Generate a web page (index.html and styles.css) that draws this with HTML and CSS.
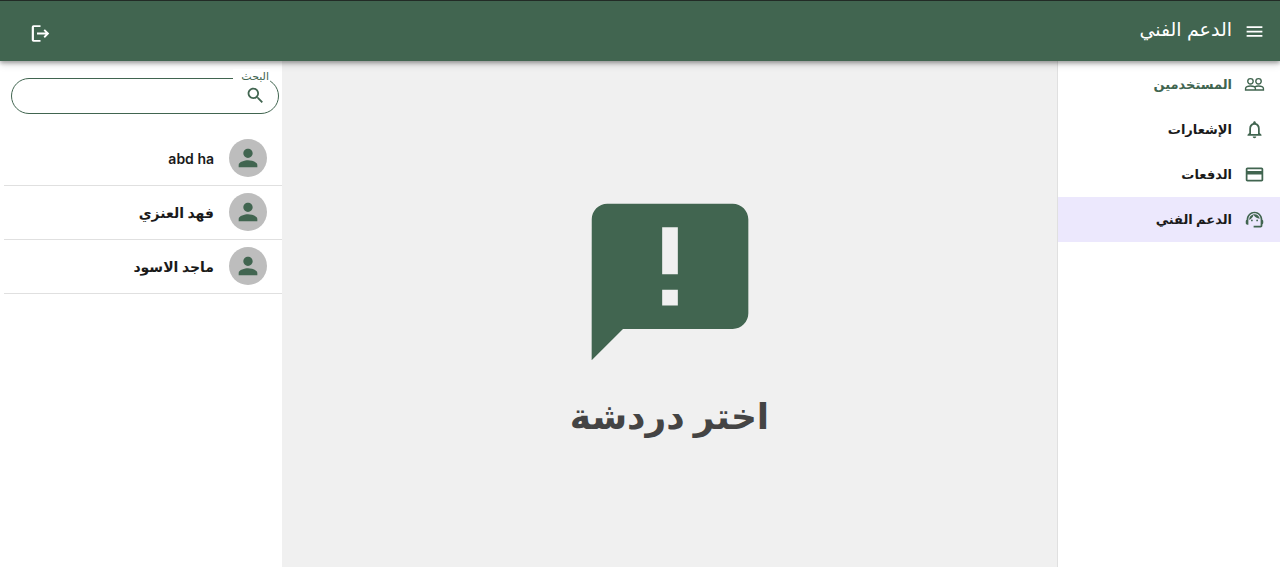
FILE: index.html
```html
<!DOCTYPE html>
<html lang="ar" dir="rtl">
<head>
<meta charset="utf-8">
<meta name="viewport" content="width=device-width, initial-scale=1">
<title>الدعم الفني</title>
<link rel="stylesheet" href="styles.css">
</head>
<body>
<header class="topbar">
  <button class="icon-button" type="button" aria-label="القائمة">
    <svg class="icon" viewBox="0 0 24 24"><path d="M3 18h18v-2H3v2zm0-5h18v-2H3v2zm0-7v2h18V6H3z"/></svg>
  </button>
  <h1 class="topbar-title">الدعم الفني</h1>
  <button class="icon-button logout" type="button" aria-label="تسجيل الخروج">
    <svg class="icon" viewBox="0 0 24 24"><path d="M12 2.500v2.200H4.500v14.600H12v2.200H4q-2 0-2-2v-15q0-2 2-2zM17 7l5 5-5 5-1.500-1.500 2.300-2.400H8v-2.200h9.800l-2.300-2.400z"/></svg>
  </button>
</header>
<div class="layout">
  <nav class="sidebar">
    <a class="nav-link nav-link-accent" href="#users">
      <svg class="icon" viewBox="0 0 24 24"><path fill="none" stroke="currentColor" stroke-width="1.600" d="M7.400 5.300a3.100 3.100 0 1 1 0 6.200 3.100 3.100 0 0 1 0-6.200zM16.600 5.300a3.100 3.100 0 1 1 0 6.200 3.100 3.100 0 0 1 0-6.200zM1.800 18.200v-1.700c0-1.800 2.400-2.800 5.600-2.800s5.600 1 5.600 2.800v1.700zM13 18.200h9.200v-1.700c0-1.800-2.400-2.800-5.600-2.800-1.700 0-3.200.3-4.200.9"/></svg>
      <span>المستخدمين</span>
    </a>
    <a class="nav-link" href="#notifications">
      <svg class="icon" viewBox="0 0 24 24"><path d="M12 22c1.100 0 2-.900 2-2h-4c0 1.100.900 2 2 2zm6-6v-5c0-3.070-1.630-5.640-4.500-6.320V4c0-.830-.670-1.500-1.500-1.500s-1.500.670-1.500 1.500v.680C7.640 5.360 6 7.920 6 11v5l-2 2v1h16v-1l-2-2zm-2 1H8v-6c0-2.480 1.510-4.500 4-4.500s4 2.020 4 4.500v6z"/></svg>
      <span>الإشعارات</span>
    </a>
    <a class="nav-link" href="#payments">
      <svg class="icon" viewBox="0 0 24 24"><path d="M20 4H4c-1.110 0-1.990.890-1.990 2L2 18c0 1.110.890 2 2 2h16c1.110 0 2-.890 2-2V6c0-1.110-.890-2-2-2zm0 14H4v-6h16v6zm0-10H4V6h16v2z"/></svg>
      <span>الدفعات</span>
    </a>
    <a class="nav-link nav-link-active" href="#support" aria-current="page">
      <svg class="icon" viewBox="0 0 24 24"><path d="M21 12.220C21 6.730 16.740 3 12 3c-4.690 0-9 3.650-9 9.280-.600.340-1 .980-1 1.720v2c0 1.100.900 2 2 2h1v-6.100c0-3.870 3.130-7 7-7s7 3.130 7 7V19h-8v2h8c1.100 0 2-.900 2-2v-1.220c.590-.310 1-.920 1-1.640v-2.300c0-.700-.410-1.310-1-1.620z"/><circle cx="9" cy="13" r="1"/><circle cx="15" cy="13" r="1"/><path d="M18 11.030C17.520 8.180 15.040 6 12.050 6c-3.030 0-6.290 2.510-6.030 6.450 2.470-1.010 4.330-3.210 4.860-5.890 1.310 2.630 4 4.440 7.120 4.470z"/></svg>
      <span>الدعم الفني</span>
    </a>
  </nav>
  <main class="empty-state">
    <svg class="empty-icon" viewBox="0 0 24 24"><path d="M20 2H4c-1.100 0-1.990.900-1.990 2L2 22l4-4h14c1.100 0 2-.900 2-2V4c0-1.100-.900-2-2-2zm-7 13h-2v-2h2v2zm0-4h-2V5h2v6z"/></svg>
    <h2 class="empty-title">اختر دردشة</h2>
  </main>
  <aside class="chats">
    <div class="search">
      <label class="search-label" for="search">البحث</label>
      <svg class="icon" viewBox="0 0 24 24"><path d="M15.500 14h-.790l-.280-.270C15.410 12.590 16 11.110 16 9.500 16 5.910 13.090 3 9.500 3S3 5.910 3 9.500 5.910 16 9.500 16c1.610 0 3.090-.590 4.230-1.570l.270.280v.790l5 4.990L20.490 19l-4.990-5zm-6 0C7.010 14 5 11.990 5 9.500S7.010 5 9.500 5 14 7.010 14 9.500 11.990 14 9.500 14z"/></svg>
      <input class="search-input" id="search" type="text">
    </div>
    <ul class="chat-list">
      <li><a class="chat" href="#chat-1"><span class="avatar"><svg viewBox="0 0 24 24"><path d="M12 12c2.210 0 4-1.790 4-4s-1.790-4-4-4-4 1.790-4 4 1.790 4 4 4zm0 2c-2.670 0-8 1.340-8 4v2h16v-2c0-2.660-5.330-4-8-4z"/></svg></span><span>abd ha</span></a></li>
      <li><a class="chat" href="#chat-2"><span class="avatar"><svg viewBox="0 0 24 24"><path d="M12 12c2.210 0 4-1.790 4-4s-1.790-4-4-4-4 1.790-4 4 1.790 4 4 4zm0 2c-2.670 0-8 1.340-8 4v2h16v-2c0-2.660-5.330-4-8-4z"/></svg></span><span>فهد العنزي</span></a></li>
      <li><a class="chat" href="#chat-3"><span class="avatar"><svg viewBox="0 0 24 24"><path d="M12 12c2.210 0 4-1.790 4-4s-1.790-4-4-4-4 1.790-4 4 1.790 4 4 4zm0 2c-2.670 0-8 1.340-8 4v2h16v-2c0-2.660-5.330-4-8-4z"/></svg></span><span>ماجد الاسود</span></a></li>
    </ul>
  </aside>
</div>
</body>
</html>
```
FILE: styles.css
```css
:root {
  --green: #416550;
  --ink: #1a1a1a;
}

* {
  box-sizing: border-box;
}

body {
  margin: 0;
  min-height: 100vh;
  display: flex;
  flex-direction: column;
  background: #fff;
  color: var(--ink);
  font-family: Inter, "DejaVu Sans", sans-serif;
}

svg {
  display: block;
  fill: currentColor;
}

.icon {
  width: 21px;
  height: 21px;
  flex: none;
}

.topbar {
  position: relative;
  display: flex;
  align-items: center;
  gap: 12px;
  min-height: 61px;
  padding: 0 15px;
  border-top: 1px solid #222b26;
  background: var(--green);
  color: #fff;
  box-shadow: 0 2px 4px rgba(0, 0, 0, 0.3), 0 3px 8px rgba(0, 0, 0, 0.15);
}

.icon-button {
  padding: 0;
  border: 0;
  background: none;
  color: inherit;
  cursor: pointer;
}

.logout {
  margin-inline-start: auto;
  padding: 4px 15px 0;
}

.topbar-title {
  margin: 0;
  padding-bottom: 2px;
  font-size: 19px;
  font-weight: 400;
  line-height: 24px;
}

.layout {
  flex: 1;
  display: flex;
}

.sidebar {
  flex: 0 0 223px;
  padding-top: 1px;
  border-inline-end: 1px solid #e0e0e0;
}

.nav-link {
  display: flex;
  align-items: center;
  gap: 12px;
  height: 45px;
  padding: 0 15px 1px;
  font-size: 13px;
  font-weight: 600;
  color: var(--ink);
  text-decoration: none;
}

.nav-link .icon {
  color: var(--green);
}

.nav-link-accent {
  color: var(--green);
}

.nav-link-active {
  background: #ece8fd;
}

.empty-state {
  flex: 1;
  display: flex;
  flex-direction: column;
  align-items: center;
  justify-content: center;
  padding-top: 16px;
  background: #f0f0f0;
}

.empty-icon {
  width: 188px;
  height: 188px;
  color: var(--green);
}

.empty-title {
  margin: 0;
  font-size: 36px;
  line-height: 80px;
  font-weight: 600;
  color: #444;
}

.chats {
  flex: 0 0 282px;
  min-width: 0;
  padding: 17px 0 0 4px;
}

.search {
  position: relative;
  display: flex;
  align-items: center;
  height: 36px;
  margin: 0 3px 18px 7px;
  padding: 0 12px 1px;
  border: 1px solid var(--green);
  border-radius: 18px;
  color: var(--green);
}

.search-label {
  position: absolute;
  top: -10px;
  right: 8px;
  padding: 0 1px 0 8px;
  background: #fff;
  font-size: 11px;
  line-height: 14px;
}

.search-input {
  flex: 1;
  width: 100%;
  min-width: 0;
  border: 0;
  outline: 0;
  background: none;
  font: inherit;
  font-size: 14px;
}

.chat-list {
  margin: 0;
  padding: 0;
  list-style: none;
}

.chat {
  display: flex;
  align-items: center;
  gap: 15px;
  height: 54px;
  padding: 0 15px 1px;
  border-bottom: 1px solid #e0e0e0;
  font-size: 14px;
  font-weight: 600;
  color: var(--ink);
  text-decoration: none;
}

.avatar {
  display: grid;
  place-items: center;
  width: 38px;
  height: 38px;
  border-radius: 50%;
  background: #bdbdbd;
  color: var(--green);
}

.avatar svg {
  width: 28px;
  height: 28px;
}
```
